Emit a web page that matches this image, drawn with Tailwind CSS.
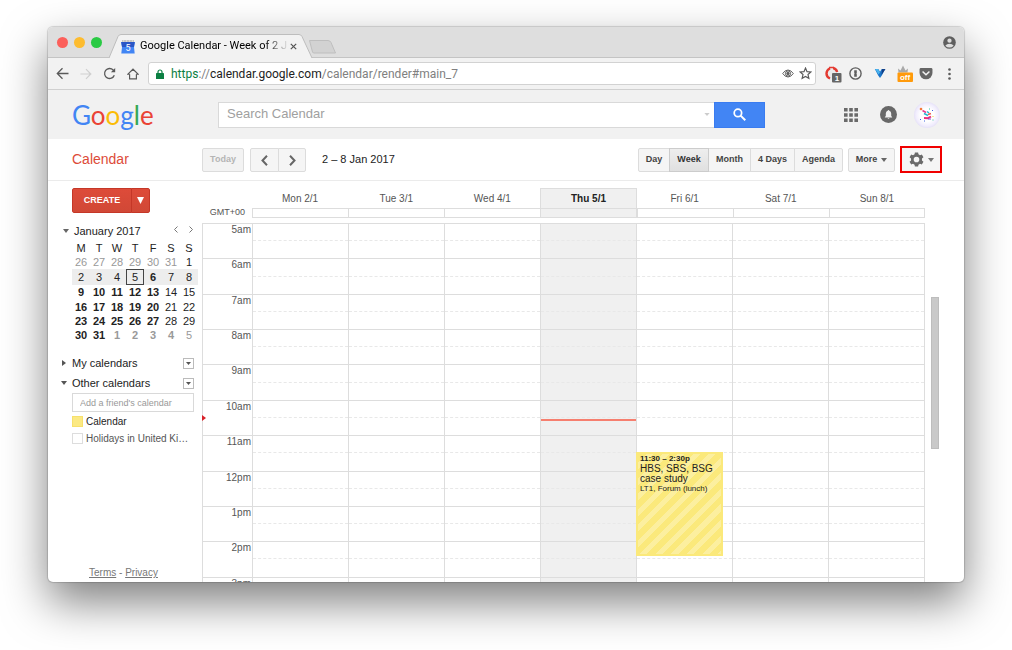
<!DOCTYPE html>
<html lang="en">
<head>
    <meta charset="utf-8">
    <meta name="viewport" content="width=device-width, initial-scale=1">
    <title>Google Calendar - Week of 2 Jan 2017</title>
    <script src="https://cdn.jsdelivr.net/npm/@tailwindcss/browser@4"></script>
</head>
<body class="bg-white font-['Liberation_Sans',Arial,sans-serif] text-[#222]">
<div class="h-screen overflow-hidden pt-[27px] pb-[68px] px-12">
    <div class="flex flex-col h-full overflow-hidden rounded-[5px] bg-white shadow-[0_20px_45px_rgba(0,0,0,0.5),0_0_1px_1px_rgba(0,0,0,0.15)]">

        <!-- tab strip -->
        <header class="flex h-[31px] shrink-0 bg-[#dedede] border-b border-[#c4c4c4] pl-[9px] pr-2 font-[Roboto,sans-serif]">
            <div class="flex items-center gap-[6px] w-[52px]">
                <span class="size-[11px] rounded-full bg-[#fc605b]"></span>
                <span class="size-[11px] rounded-full bg-[#fdbc2f]"></span>
                <span class="size-[11px] rounded-full bg-[#2aca44]"></span>
            </div>
            <div class="relative mt-[7px] h-6 w-[204px] -mb-px">
                <svg class="absolute inset-0 w-full h-full" viewBox="0 0 204 24" preserveAspectRatio="none">
                    <path d="M0 24 L9 2.500 Q10 .5 12 .5 H190 Q192 .5 193 2.500 L203 24" fill="#f2f2f2" stroke="#bdbdbd" />
                </svg>
                <div class="relative flex items-center h-full pl-3">
                    <svg class="size-[14px] mt-px shrink-0" viewBox="0 0 14 14">
                        <path d="M1 0h12v2H1z" fill="#c4c4c4" />
                        <path d="M2 1h1m2 0h1m2 0h1m2 0h1" stroke="#eee" />
                        <path d="M0 2h14l-1 5 .7 6.500H.3L1 7z" fill="#4285f4" />
                        <path d="M.3 2h13.400L13 7H1z" fill="#2a56c6" />
                        <text x="7" y="11" text-anchor="middle" font-size="9" fill="#fff" font-family="Roboto">5</text>
                    </svg>
                    <span class="ml-[5px] mt-px w-[147px] overflow-hidden whitespace-nowrap text-[11px] text-transparent bg-clip-text bg-linear-to-r from-black from-85% to-[#222]/10">Google Calendar - Week of 2 J</span>
                    <button class="ml-[3px] p-0" aria-label="Close tab">
                        <svg class="size-[7px]" viewBox="0 0 7 7"><path d="M.8 .8l5.400 5.400M6.200 .8L.8 6.200" stroke="#555" stroke-width="1.200" /></svg>
                    </button>
                </div>
            </div>
            <button aria-label="New tab" class="-ml-[5px] mt-[9px]">
                <svg class="w-[29px] h-[14px]" viewBox="0 0 29 14"><path d="M1.500 .5H20Q22 .5 23 2.500L27.500 13H7Q5 13.500 4.500 12Z" fill="#d2d2d2" stroke="#bebebe" /></svg>
            </button>
            <button aria-label="Profile" class="ml-auto">
                <svg class="size-[13px]" viewBox="0 0 14 14">
                    <circle cx="7" cy="7" r="6.800" fill="#5f5f5f" />
                    <circle cx="7" cy="5" r="2.300" fill="#dedede" />
                    <path d="M2.500 10.500Q4 8.300 7 8.300t4.500 2.200Q9.500 12.500 7 12.500T2.500 10.500z" fill="#dedede" />
                </svg>
            </button>
        </header>

        <!-- address bar -->
        <nav class="flex items-center h-8 shrink-0 bg-[#f2f2f2] border-b border-[#d0d0d0] pl-2 pr-2">
            <div class="flex items-center gap-[11px] w-[92px]">
                <button aria-label="Back"><svg class="size-[13px]" viewBox="0 0 13 13" fill="none" stroke="#5a5a5a" stroke-width="1.300"><path d="M12.500 6.500H1.500M6.500 1.300L1.300 6.500l5.200 5.200" /></svg></button>
                <button aria-label="Forward"><svg class="size-[12px]" viewBox="0 0 13 13" fill="none" stroke="#cfcfcf" stroke-width="1.300"><path d="M.5 6.500h11M6.500 1.300l5.200 5.200-5.200 5.200" /></svg></button>
                <button aria-label="Reload"><svg class="size-[13px]" viewBox="0 0 13 13" fill="none" stroke="#5a5a5a" stroke-width="1.300"><path d="M11.300 8.200A5 5 0 1 1 10.200 3L11.500 4.200" /><path d="M12.200 1V5.300H7.900z" fill="#5a5a5a" stroke="none" /></svg></button>
                <button aria-label="Home"><svg class="size-[12px]" viewBox="0 0 13 13" fill="none" stroke="#5a5a5a" stroke-width="1.300"><path d="M2.800 6.700v5h7.400v-5M2.800 6.700H.9L6.500 1.300l5.600 5.400h-1.900" /></svg></button>
            </div>
            <div class="flex flex-1 items-center h-[23px] rounded-[3px] border border-[#d2d2d2] bg-white px-[7px] font-[Roboto,sans-serif] text-[12px]">
                <svg class="w-[8px] h-[10px] mr-[7px]" viewBox="0 0 8 10"><path d="M2 5V3a2 2 0 0 1 4 0v2" fill="none" stroke="#0b8043" stroke-width="1.200" /><rect y="4" width="8" height="6" rx=".6" fill="#0b8043" /></svg>
                <span class="flex-1 whitespace-nowrap text-[#808080]"><span class="text-[#0b8043]">https</span>://<span class="text-[#222]">calendar.google.com</span>/calendar/render#main_7</span>
                <svg class="w-[12px] h-[9px] mr-[5px]" viewBox="0 0 12 9" fill="none" stroke="#5f5f5f"><path d="M.7 4.500Q3 1 6 1t5.300 3.500Q9 8 6 8T.7 4.500z" /><circle cx="6" cy="4.500" r="2.600" /><circle cx="6" cy="4.500" r="1.200" fill="#5f5f5f" /></svg>
                <svg class="size-[13px] -mr-[4px]" viewBox="0 0 12 12" fill="none" stroke="#5a5a5a" stroke-width="1.100"><path d="M6 1l1.400 3.300 3.600.3-2.700 2.400.8 3.500L6 8.700l-3.100 1.800.8-3.500L1 4.600l3.600-.3z" /></svg>
            </div>
            <div class="flex items-center ml-[9px]">
                <svg class="w-[17px] h-[18px] mr-[7px]" viewBox="0 0 17 18">
                    <path d="M4 2.500h5L12.500 6v5L9 14.500H4L.8 11V6z" fill="#ececec" />
                    <path d="M5 13.500Q1.500 12 1.500 8.500T5 3.200M8 3q3 .3 4.200 4" fill="none" stroke="#e43b32" stroke-width="2.400" />
                    <path d="M4 2.500h5" stroke="#e43b32" stroke-width="1.500" />
                    <rect x="7" y="8" width="9.500" height="9.500" rx="1" fill="#666" />
                    <text x="12" y="16" text-anchor="middle" font-size="8" font-weight="bold" fill="#fff">1</text>
                </svg>
                <svg class="size-[13px] mr-[12px]" viewBox="0 0 13 13"><circle cx="6.500" cy="6.500" r="5.600" fill="none" stroke="#5f5f5f" stroke-width="1.400" /><path d="M5.200 3.300h2.600v3l-.5.400.5.500v2.500H5.200v-3l.5-.4-.5-.5z" fill="#5f5f5f" /></svg>
                <svg class="w-[12px] h-[11px] mr-[11px]" viewBox="0 0 12 11"><path d="M.8 1h3.500L6 3.800 7.700 1h3.500L7.800 7.500 6 10 4.200 7.500z" fill="#1b75c9" /><path d="M1 1h3l2 3.500-1.500 2z" fill="#49b3ee" /><path d="M8 1h3.500L7.500 7z" fill="#123f86" /></svg>
                <svg class="w-[16px] h-[19px] mr-[6px]" viewBox="0 0 16 19">
                    <path d="M1.500 8.500L1 4.500l2.500 2L6 1.500 8.500 6.500 11 4.500l-.5 4z" fill="#a9a9a9" />
                    <rect x=".5" y="8.500" width="15.500" height="9.500" rx="1" fill="#ff9a0b" />
                    <text x="8" y="16" text-anchor="middle" font-size="8" font-weight="bold" fill="#fff">off</text>
                </svg>
                <svg class="w-[14px] h-[12px] mr-[15px]" viewBox="0 0 14 13"><path d="M1.500 0h11Q14 0 14 1.500V5.500A7 6.800 0 0 1 0 5.500V1.500Q0 0 1.500 0z" fill="#666" /><path d="M3.700 4.200L7 7.300l3.300-3.100" fill="none" stroke="#f2f2f2" stroke-width="1.500" stroke-linecap="round" /></svg>
                <button aria-label="Menu" class="mr-[5px]"><svg class="w-[3px] h-[12px]" viewBox="0 0 3 12" fill="#5a5a5a"><circle cx="1.500" cy="1.500" r="1.300" /><circle cx="1.500" cy="6" r="1.300" /><circle cx="1.500" cy="10.500" r="1.300" /></svg></button>
            </div>
        </nav>

        <!-- google bar -->
        <div class="flex items-center h-[49px] shrink-0 bg-[#f1f1f1] pl-6 pr-6">
            <a href="#" class="w-[146px] font-[Lato,sans-serif] text-[26px] leading-8 text-[#4285f4]" aria-label="Google">G<span class="text-[#ea4335]">o</span><span class="text-[#fbbc05]">o</span>g<span class="text-[#34a853]">l</span><span class="text-[#ea4335]">e</span></a>
            <div class="flex h-[26px] w-[547px]">
                <div class="flex flex-1 items-center border border-r-0 border-[#d9d9d9] bg-white">
                    <input type="text" aria-label="Search Calendar" placeholder="Search Calendar" class="flex-1 min-w-0 px-2 pb-px text-[13px] outline-none placeholder:text-[#a0a0a0]">
                    <svg class="w-[6px] h-[3px] mr-1" viewBox="0 0 7 4"><path d="M0 0h7L3.500 4z" fill="#ccc" /></svg>
                </div>
                <button aria-label="Search" class="flex items-center justify-center w-[51px] bg-[#4285f4] border border-[#3a7cf0]">
                    <svg class="size-[13px]" viewBox="0 0 14 14" fill="none" stroke="#fff"><circle cx="5.300" cy="5.300" r="4" stroke-width="1.900" /><path d="M8.200 8.200l5 5" stroke-width="2.200" /></svg>
                </button>
            </div>
            <div class="flex items-center ml-auto">
                <button aria-label="Apps" class="mr-[22px]">
                    <svg class="size-[14px]" viewBox="0 0 14 14" fill="#6a6a6a"><path d="M0 0h3.600v3.600H0zM5.200 0h3.600v3.600H5.200zM10.400 0H14v3.600h-3.600zM0 5.200h3.600v3.600H0zM5.200 5.200h3.600v3.600H5.200zM10.400 5.200H14v3.600h-3.600zM0 10.400h3.600V14H0zM5.200 10.400h3.600V14H5.200zM10.400 10.400H14V14h-3.600z" /></svg>
                </button>
                <button aria-label="Notifications" class="mr-[17px]">
                    <svg class="size-[17px]" viewBox="0 0 17 17"><circle cx="8.500" cy="8.500" r="8.500" fill="#686868" /><path d="M8.500 4q.8 0 .8.800 1.900.5 1.900 2.700v2.500l.9.900v.6H4.900v-.6l.9-.9V7.500q0-2.200 1.900-2.700 0-.8.800-.8zM7.600 12h1.800q-.1.800-.9.800t-.9-.8z" fill="#f1f1f1" /></svg>
                </button>
                <button aria-label="Account">
                    <svg class="size-[26px]" viewBox="0 0 26 26">
                        <defs><radialGradient id="orb"><stop offset=".5" stop-color="#fff" /><stop offset=".85" stop-color="#f1edfd" /><stop offset="1" stop-color="#e6e2f7" /></radialGradient></defs>
                        <circle cx="13" cy="13" r="13" fill="url(#orb)" />
                        <circle cx="7" cy="7" r="1.300" fill="#f4793b" />
                        <path d="M8.500 8.500l3.500 2" stroke="#e9388d" stroke-width="1.500" />
                        <path d="M10 11.500l4 2M13 9.500l2 1.500" stroke="#21b7d6" stroke-width="1.500" />
                        <path d="M10 16l4 .2 3-1.700" stroke="#e8307e" stroke-width="2" fill="none" />
                        <path d="M14 12.500l3-1" stroke="#ef5b4f" stroke-width="1.500" />
                        <path d="M14 17h3" stroke="#7f4fd0" stroke-width="1" />
                        <path d="M6 17.500h1M18 8.500h1M10 19h1" stroke="#3c62e0" />
                        <path d="M18.500 18h1M15 7h1" stroke="#35c2a0" />
                        <path d="M18.500 14.500h1" stroke="#f3c52f" />
                    </svg>
                </button>
            </div>
        </div>

        <!-- action bar -->
        <div class="flex items-center h-[42px] shrink-0 border-b border-[#ebebeb] pl-6 pr-[22px] text-[9px] font-bold text-[#444]">
            <h1 class="w-[130px] text-[14px] font-normal text-[#dd4b39]">Calendar</h1>
            <button disabled class="h-6 w-[42px] rounded-[2px] border border-[#dcdcdc] bg-[#f3f3f3] text-[#b5b5b5]">Today</button>
            <div class="flex ml-[6px]">
                <button aria-label="Previous week" class="flex items-center justify-center h-6 w-[29px] rounded-l-[2px] border border-[#dcdcdc] bg-[#f5f5f5]"><svg class="w-[7px] h-[11px] mt-px" viewBox="0 0 7 11" fill="none" stroke="#666" stroke-width="2"><path d="M6 .8L1.500 5.500 6 10.200" /></svg></button>
                <button aria-label="Next week" class="flex items-center justify-center h-6 w-[28px] -ml-px rounded-r-[2px] border border-[#dcdcdc] bg-[#f5f5f5]"><svg class="w-[7px] h-[11px] mt-px" viewBox="0 0 7 11" fill="none" stroke="#666" stroke-width="2"><path d="M1 .8l4.500 4.700L1 10.200" /></svg></button>
            </div>
            <span class="ml-4 text-[11px] font-normal text-[#222]">2 – 8 Jan 2017</span>
            <div class="flex ml-auto">
                <button class="h-6 w-8 rounded-l-[2px] border border-[#dcdcdc] bg-[#f5f5f5]">Day</button>
                <button class="relative h-6 w-10 -ml-px border border-[#ccc] bg-linear-to-b from-[#eee] to-[#e0e0e0] text-[#333]">Week</button>
                <button class="h-6 w-[43px] -ml-px border border-[#dcdcdc] bg-[#f5f5f5]">Month</button>
                <button class="h-6 w-[45px] -ml-px border border-[#dcdcdc] bg-[#f5f5f5]">4 Days</button>
                <button class="h-6 w-[49px] -ml-px rounded-r-[2px] border border-[#dcdcdc] bg-[#f5f5f5]">Agenda</button>
            </div>
            <button class="flex items-center justify-center gap-1 h-6 w-[47px] ml-[5px] rounded-[2px] border border-[#dcdcdc] bg-[#f5f5f5]">More <svg class="w-[6px] h-[4px]" viewBox="0 0 6 4"><path d="M0 0h6L3 4z" fill="#666" /></svg></button>
            <button aria-label="Settings" class="flex items-center justify-center gap-1 h-[27px] w-[42px] ml-[5px] border-2 border-[#f00000] bg-[#f5f5f5]">
                <svg class="size-[15px]" viewBox="0 0 16 16"><path d="M6.300 .5h3.400l.4 2 1.600.9 2-.7 1.700 2.900L13.800 7v2l1.600 1.400-1.700 2.900-2-.7-1.600.9-.4 2H6.300l-.4-2-1.600-.9-2 .7L.6 10.400 2.200 9V7L.6 5.600l1.700-2.900 2 .7 1.600-.9zM8 5a3 3 0 1 0 0 6 3 3 0 0 0 0-6z" fill="#6a6a6a" fill-rule="evenodd" /></svg>
                <svg class="w-[6px] h-[4px]" viewBox="0 0 6 4"><path d="M0 0h6L3 4z" fill="#777" /></svg>
            </button>
        </div>

        <div class="flex flex-1 min-h-0">
            <!-- sidebar -->
            <aside class="flex flex-col w-[154px] shrink-0 pt-[7px] pl-3 pr-[3px] text-[11px]">
                <div class="flex ml-3 h-[25px] w-[78px] text-[9px] font-bold text-white">
                    <button class="flex-1 rounded-l-[2px] border border-[#c53727] bg-linear-to-b from-[#dd4b39] to-[#d14836]">CREATE</button>
                    <button aria-label="Create options" class="flex items-center justify-center w-[19px] -ml-px rounded-r-[2px] border border-[#c53727] bg-linear-to-b from-[#dd4b39] to-[#d14836]"><svg class="size-[7px]" viewBox="0 0 7 7"><path d="M0 0h7L3.500 7z" fill="#fff" /></svg></button>
                </div>

                <div class="flex items-center mt-[9px] h-[18px] pl-[3px]">
                    <svg class="w-[6px] h-[4px] mr-[5px]" viewBox="0 0 6 4"><path d="M0 0h6L3 4z" fill="#666" /></svg>
                    <h2>January 2017</h2>
                    <button aria-label="Previous month" class="ml-auto mb-[3px]"><svg class="w-[4px] h-[7px]" viewBox="0 0 4 7" fill="none" stroke="#777"><path d="M3.500 .5l-3 3 3 3" /></svg></button>
                    <button aria-label="Next month" class="ml-[11px] mr-[6px] mb-[3px]"><svg class="w-[4px] h-[7px]" viewBox="0 0 4 7" fill="none" stroke="#777"><path d="M.5 .5l3 3-3 3" /></svg></button>
                </div>
                <table class="ml-3 mt-px w-[126px] table-fixed text-center leading-[14px]">
                    <thead>
                        <tr><th class="font-normal">M</th><th class="font-normal">T</th><th class="font-normal">W</th><th class="font-normal">T</th><th class="font-normal">F</th><th class="font-normal">S</th><th class="font-normal">S</th></tr>
                    </thead>
                    <tbody>
                        <tr class="text-[#999]"><td>26</td><td>27</td><td>28</td><td>29</td><td>30</td><td>31</td><td class="text-[#222]">1</td></tr>
                        <tr class="h-4 bg-[#ededed]"><td>2</td><td>3</td><td>4</td><td class="outline -outline-offset-1 outline-[#444]">5</td><td class="font-bold">6</td><td>7</td><td>8</td></tr>
                        <tr class="font-bold"><td>9</td><td>10</td><td>11</td><td>12</td><td>13</td><td class="font-normal">14</td><td class="font-normal">15</td></tr>
                        <tr class="h-[15px] font-bold"><td>16</td><td>17</td><td>18</td><td>19</td><td>20</td><td class="font-normal">21</td><td class="font-normal">22</td></tr>
                        <tr class="font-bold"><td>23</td><td>24</td><td>25</td><td>26</td><td>27</td><td class="font-normal">28</td><td class="font-normal">29</td></tr>
                        <tr class="font-bold"><td>30</td><td>31</td><td class="text-[#999]">1</td><td class="text-[#999]">2</td><td class="text-[#999]">3</td><td class="text-[#999]">4</td><td class="font-normal text-[#999]">5</td></tr>
                    </tbody>
                </table>

                <div class="flex items-center mt-[11px] h-5 pl-[2px] pr-[5px]">
                    <svg class="w-[4px] h-[6px] mr-[6px]" viewBox="0 0 4 6"><path d="M0 0v6l4-3z" fill="#555" /></svg>
                    <h2>My calendars</h2>
                    <button aria-label="My calendars menu" class="flex items-center justify-center size-[11px] ml-auto border border-[#bbb]"><svg class="w-[5px] h-[3px]" viewBox="0 0 5 3"><path d="M0 0h5L2.500 3z" fill="#555" /></svg></button>
                </div>
                <div class="flex items-center h-5 pl-px pr-[5px]">
                    <svg class="w-[6px] h-[4px] mr-[5px]" viewBox="0 0 6 4"><path d="M0 0h6L3 4z" fill="#555" /></svg>
                    <h2>Other calendars</h2>
                    <button aria-label="Other calendars menu" class="flex items-center justify-center size-[11px] ml-auto border border-[#bbb]"><svg class="w-[5px] h-[3px]" viewBox="0 0 5 3"><path d="M0 0h5L2.500 3z" fill="#555" /></svg></button>
                </div>
                <input type="text" aria-label="Add a friend's calendar" placeholder="Add a friend's calendar" class="ml-3 h-[19px] w-[122px] shrink-0 border border-[#d9d9d9] px-[7px] text-[9px] outline-none placeholder:text-[#999]">
                <label class="flex items-center h-[17px] mt-px ml-3 gap-[3px] text-[10px]"><input type="checkbox" checked class="size-[11px] appearance-none border border-[#f7e06c] bg-[#fbe983]">Calendar</label>
                <label class="flex items-center h-[17px] ml-3 gap-[3px] text-[10px] text-[#555]"><input type="checkbox" class="size-[11px] appearance-none border border-[#ddd] bg-white">Holidays in United Ki…</label>

                <div class="mt-auto mb-[2px] ml-[29px] text-[10px] leading-[14px] text-[#777]"><a href="#" class="underline">Terms</a> - <a href="#" class="underline">Privacy</a></div>
            </aside>

            <!-- week view -->
            <main class="relative flex flex-col flex-1 min-w-0 pt-[7px] text-[10px] text-[#555]">
                <div class="flex h-[30px] mr-[39px] shrink-0">
                    <div class="w-[50px] shrink-0 flex items-end justify-end pr-[7px] text-[9px] leading-[12px]">GMT+00</div>
                    <div id="days" class="flex-1 grid grid-cols-7"></div>
                </div>
                <div class="flex flex-1 min-h-0 mt-[5px]">
                    <div class="flex-1 overflow-hidden border-t border-[#ddd]">
                        <div class="flex h-[388px]">
                            <div id="hours" class="flex flex-col w-[50px] shrink-0 border-l border-[#ddd] text-right"></div>
                            <div id="week" class="flex-1 grid grid-cols-7 border-r border-[#ddd]"></div>
                        </div>
                    </div>
                    <div class="w-[39px] shrink-0 pt-[74px] pl-[6px]">
                        <div class="w-2 h-[152px] bg-[#c9c9c9] border border-[#bdbdbd]"></div>
                    </div>
                </div>
                <!-- current time marker -->
                <svg class="absolute left-0 top-[234px] w-[4px] h-[6px]" viewBox="0 0 4 6"><path d="M0 0v6l4-3z" fill="#d9222a" /></svg>
            </main>
        </div>
    </div>
</div>

<template id="event">
    <div class="absolute -left-px top-[228px] h-[104px] w-[87px] border-2 border-[#fbe97b] pl-[2px] leading-[10px] text-[#222] bg-[repeating-linear-gradient(135deg,#fbe97b_0_6px,#fcef9f_6px_11px)]">
        <div class="text-[8px] font-bold">11:30 – 2:30p</div>
        <div>HBS, SBS, BSG<br>case study</div>
        <div class="text-[8px]">LT1, Forum (lunch)</div>
    </div>
</template>

<script>
    const days = ["Mon 2/1", "Tue 3/1", "Wed 4/1", "Thu 5/1", "Fri 6/1", "Sat 7/1", "Sun 8/1"];
    const hours = ["5am", "6am", "7am", "8am", "9am", "10am", "11am", "12pm", "1pm", "2pm", "3pm"];
    const TODAY = 3;
    const EVENT_DAY = 4;

    document.getElementById("days").innerHTML = days.map((day, i) => `
        <div class="flex flex-col text-center ${i === TODAY ? "bg-[#f0f0f0] font-bold text-[#222] shadow-[inset_0_0_0_1px_#ddd]" : ""}">
            <div class="h-5 leading-[21px]">${day}</div>
            <div class="flex-1 border-l border-y border-[#ddd] ${i === days.length - 1 ? "border-r" : ""}"></div>
        </div>`).join("");

    document.getElementById("hours").innerHTML = hours.map((hour, i) => `
        <div class="flex-1 pr-px leading-[12px] ${i ? "border-t border-[#ddd]" : ""}">${hour}</div>`).join("");

    const cells = hours.map((hour, i) => `
        <div class="flex-1 ${i ? "border-t border-[#ddd]" : ""}"><div class="h-1/2 border-b border-dashed border-[#e8e8e8]"></div></div>`).join("");

    document.getElementById("week").innerHTML = days.map((day, i) => `
        <div class="relative flex flex-col border-l border-[#ddd] ${i === TODAY ? "bg-[#f0f0f0]" : ""}">
            ${cells}
            ${i === TODAY ? `<div class="absolute inset-x-0 top-[195px] h-[2px] bg-[#f67f6f]"></div>` : ""}
            ${i === EVENT_DAY ? document.getElementById("event").innerHTML : ""}
        </div>`).join("");
</script>
</body>
</html>
